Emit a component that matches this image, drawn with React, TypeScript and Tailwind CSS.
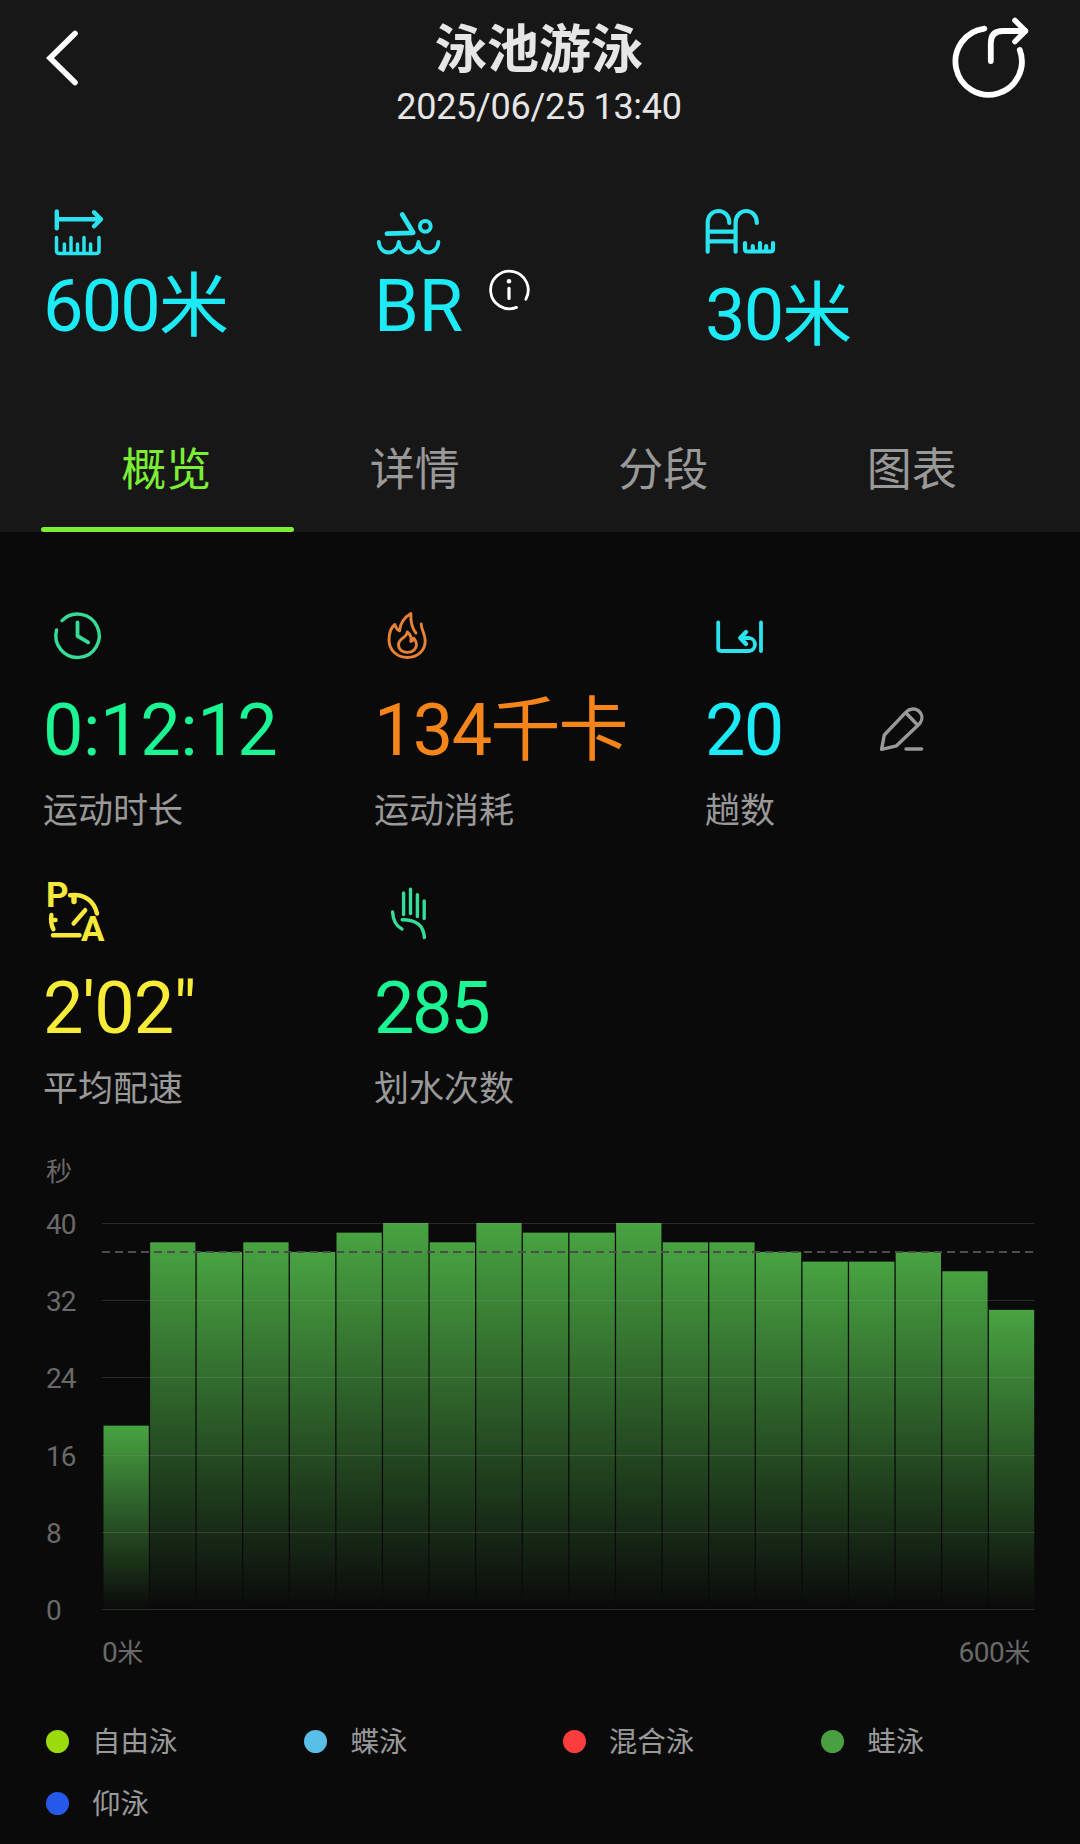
import React from "react";

const SANS = "font-[Roboto,'Noto_Sans_CJK_SC',sans-serif]";

interface IconProps {
  viewBox: string;
  className?: string;
  children: React.ReactNode;
}

function Icon({ viewBox, className = "", children }: IconProps) {
  const [, , width, height] = viewBox.split(" ");
  return (
    <svg
      width={width}
      height={height}
      viewBox={viewBox}
      fill="none"
      stroke="currentColor"
      strokeWidth={3.4}
      strokeLinecap="round"
      strokeLinejoin="round"
      className={`block shrink-0 overflow-visible ${className}`}
    >
      {children}
    </svg>
  );
}

const BackIcon = () => (
  <Icon viewBox="44 28 38 60" className="text-white">
    <path d="M75 33.5L50 58L75 82.5" strokeWidth={5.6} strokeLinejoin="miter" />
  </Icon>
);

const ShareIcon = () => (
  <Icon viewBox="950 16 82 84" className="text-white">
    <g strokeWidth={5.8}>
      <path d="M984.4 28.6A33.2 33.2 0 1 0 1019.8 50" />
      <path d="M990.8 61V43Q990.8 31 1003 31H1025" />
      <path d="M1014.9 20.4L1025.5 31L1014.9 41.6" strokeWidth={5.4} />
    </g>
  </Icon>
);

const DistanceIcon = () => (
  <Icon viewBox="44 200 80 60" className="text-[#2be3ee]">
    <path d="M56.8 211.5V228.3M57 219.3H100M94 212.3L101 219.3L94 226.3" strokeWidth={4.4} />
    <path d="M56.5 237.5V250.5Q56.5 253.5 59.5 253.5H96Q99 253.5 99 250.5V237.5" strokeWidth={3.5} />
    <path
      d="M64.4 244V252M71 237.5V252M77.5 244V252M84 237.5V252M90.6 244V252"
      strokeWidth={3.5}
    />
  </Icon>
);

const SwimIcon = () => (
  <Icon viewBox="375 200 80 60" className="text-[#2be3ee]">
    <circle cx="425.3" cy="226.3" r="5.4" strokeWidth={4} />
    <path d="M402.2 214.5L413.2 232.8L387 233.6" strokeWidth={4.8} />
    <path
      d="M378.8 242C380 256 397 256 398.8 242C400.5 256 416.5 256 418.5 242C420 256 437 256 438.4 242"
      strokeWidth={3.8}
    />
  </Icon>
);

const PoolIcon = () => (
  <Icon viewBox="706 200 80 60" className="text-[#2be3ee]">
    <g strokeWidth={4.2}>
      <path d="M707.7 251.7V223C707.7 207 729.3 207 729.3 223" />
      <path d="M735.6 251.7V223C735.6 207 756.8 207 756.8 223" />
      <path d="M708 231.7H735M708 241.3H735" />
      <path d="M745 243V249Q745 251.5 747.5 251.5H770.5Q773 251.5 773 249V243M752.8 246V250M760 243V250M766.2 246V250" />
    </g>
  </Icon>
);

const InfoIcon = () => (
  <Icon viewBox="488 268 44 44" className="mt-[-3px] text-white">
    <path d="M516.5 307.4A18.8 18.8 0 1 1 525.8 299.2" strokeWidth={2.8} />
    <path d="M509 288.3V298.5" strokeWidth={3.2} />
    <circle cx="509" cy="281.2" r="2.3" fill="currentColor" stroke="none" />
  </Icon>
);

const ClockIcon = () => (
  <Icon viewBox="44 605 80 60" className="text-[#35dd98]">
    <path d="M62 620.6A21.7 21.7 0 1 1 56.6 630" />
    <path d="M77.5 622.5V636L88.2 642.3" strokeWidth={3.8} />
  </Icon>
);

const FlameIcon = () => (
  <Icon viewBox="375 605 80 60" className="text-[#e98236]">
    <path
      d="M421.2 624C421.5 631 425.2 633 425.2 641C425.2 651 417 657.5 407.5 657.5C397 657.5 389 650 389 640C389 633 391 627.5 394.8 624.5C396 628 397.5 630 399.6 630.8C400.5 622 405 617 410.9 613.6C410.5 621 411.5 627.5 415.9 633"
      strokeWidth={2.9}
    />
    <path
      d="M407.3 632C407 637.5 398.5 638.5 398.5 644.5C398.5 649.5 402.5 652.4 407.5 652.4C412.8 652.4 416.5 649 416.5 644.5C416.5 641.5 415 639.8 413.8 638.2C413.4 640 412.4 641 410.8 641.4C411.8 637.5 410.5 634.5 407.3 632Z"
      strokeWidth={2.9}
    />
  </Icon>
);

const LapIcon = () => (
  <Icon viewBox="706 605 80 60" className="text-[#2be3ee]">
    <g strokeWidth={3.8}>
      <path d="M718.2 622.5V648Q718.2 651 721.2 651H749.5A6.6 6.6 0 0 0 749.5 638H741" />
      <path d="M746 632L740.3 638L746 644" strokeWidth={4.4} />
      <path d="M761 622.5V651" />
    </g>
  </Icon>
);

const EditIcon = () => (
  <Icon viewBox="876 700 52 56" className="text-[#999]">
    <path d="M881.6 749.3L884.3 735L906 712.2C914 704 927 713 919.8 723.5L896.5 745.8L881.6 749.3Z" />
    <path d="M906.5 713.5L916.8 724.2M906 749H921.6" />
  </Icon>
);

const PaceIcon = () => (
  <Icon viewBox="44 883 80 60" className="text-[#f8e83c]">
    <g
      fill="currentColor"
      stroke="none"
      className="font-[Roboto,sans-serif] text-[35px] font-bold"
    >
      <text x="46" y="907.3">
        P
      </text>
      <text x="81" y="941.3">
        A
      </text>
    </g>
    <g strokeWidth={4.4}>
      <path d="M70 895.3C84 893.5 94 900.5 97 913.5M85.2 910.2L73.6 923.5" />
      <path d="M53 935.3H79.5M51.4 915C50.6 920 51.2 925 53.4 929.3M53 920H55.5" />
      <path d="M74 897.5V901.5" strokeWidth={5.4} />
    </g>
  </Icon>
);

const HandIcon = () => (
  <Icon viewBox="375 883 80 60" className="text-[#35dd98]">
    <path d="M403.6 893V914.5M410.5 889.2V913.5M417.4 894.8V916.5M424.2 901V918.5" />
    <path d="M392.6 912C393 921 396 926 402 929M402.2 919.8C417 919.8 423.5 925.5 424.4 937.5" />
  </Icon>
);

interface ValueProps {
  value: string;
  unit?: string;
  className?: string;
}

function Value({ value, unit, className = "tracking-[-1.8px]" }: ValueProps) {
  return (
    <div className={`-ml-px h-[72px] whitespace-nowrap text-[72px] leading-none ${className}`}>
      {value}
      {unit && <span className="text-[70px] leading-[0] tracking-[-2px]">{unit}</span>}
    </div>
  );
}

interface MetricProps extends ValueProps {
  icon: React.ReactNode;
  label: string;
  action?: React.ReactNode;
}

function Metric({ icon, value, unit, label, className, action }: MetricProps) {
  return (
    <div className="h-[278px]">
      {icon}
      <div className="mt-[30px] flex">
        <Value value={value} unit={unit} className={className} />
        {action}
      </div>
      <div className="-ml-px mt-[27px] whitespace-nowrap text-[35px] leading-none text-[#999]">
        {label}
      </div>
    </div>
  );
}

const tabs = ["概览", "详情", "分段", "图表"];

const laps = [19, 38, 37, 38, 37, 39, 40, 38, 40, 39, 39, 40, 38, 38, 37, 36, 36, 37, 35, 31];

const ticks = [40, 32, 24, 16, 8, 0];

const strokes = [
  { name: "自由泳", dot: "bg-[#9bdb0c]" },
  { name: "蝶泳", dot: "bg-[#58bfe6]" },
  { name: "混合泳", dot: "bg-[#fb3e3d]" },
  { name: "蛙泳", dot: "bg-[#48a041]" },
  { name: "仰泳", dot: "bg-[#2459ea]" },
];

// Plot area is 932 x 386, one second is 9.65px high
const SECOND = 9.65;

function LapChart() {
  return (
    <svg width="933" height="390" viewBox="0 0 933 390" className="block">
      <defs>
        <linearGradient id="lap" x1="0" y1="0" x2="0" y2="1">
          <stop offset="0" stopColor="#48a341" />
          <stop offset="1" stopColor="#48a341" stopOpacity="0" />
        </linearGradient>
      </defs>
      {laps.map((seconds, i) => (
        <rect
          key={i}
          x={1.5 + i * 46.6}
          y={388 - seconds * SECOND}
          width="45.3"
          height={seconds * SECOND}
          fill="url(#lap)"
        />
      ))}
      {ticks.map((tick) => (
        <path
          key={tick}
          d={`M0 ${Math.round(388 - tick * SECOND) + 0.5}H932.5`}
          stroke="#999"
          strokeOpacity="0.22"
        />
      ))}
      <path d="M0 31H932.5" stroke="#4a4f4a" strokeWidth="2" strokeDasharray="8 5" />
    </svg>
  );
}

export default function App() {
  return (
    <div className={`h-[1844px] w-[1080px] overflow-hidden bg-[#0a0a0a] ${SANS}`}>
      <header className="flex h-[532px] flex-col bg-[#171717]">
        <div className="flex h-[172px] items-start justify-between pl-[44px] pr-[48px] text-[#e6e6e6]">
          <div className="w-[84px] pt-[28px]">
            <BackIcon />
          </div>
          <div className="pt-[25px] text-center">
            <h1 className="text-[52px] font-bold leading-none">泳池游泳</h1>
            <p className="mt-[12px] text-[36px] leading-none tracking-[-0.3px]">2025/06/25 13:40</p>
          </div>
          <div className="w-[82px] pt-[16px]">
            <ShareIcon />
          </div>
        </div>

        <div className="mt-[28px] grid grid-cols-[331px_331px_331px] pl-[44px] text-[#1ceaf4]">
          <div>
            <DistanceIcon />
            <div className="mt-[11px]">
              <Value value="600" unit="米" />
            </div>
          </div>
          <div>
            <SwimIcon />
            <div className="mt-[11px] flex gap-[25px]">
              <Value value="BR" className="tracking-[-0.2px]" />
              <InfoIcon />
            </div>
          </div>
          <div>
            <PoolIcon />
            <div className="mt-[20px]">
              <Value value="30" unit="米" />
            </div>
          </div>
        </div>

        <nav className="mt-auto flex pl-[43px] text-[45px] leading-none text-[#999]">
          {tabs.map((tab, i) => (
            <div key={tab} className="flex w-[248.5px] flex-col items-center">
              <span className={i === 0 ? "mr-[2px] text-[#7bee36]" : "mr-[2px]"}>{tab}</span>
              <span
                className={`mt-[34px] h-[5px] w-[253px] rounded-full ${i === 0 ? "bg-[#7bee36]" : ""}`}
              />
            </div>
          ))}
        </nav>
      </header>

      <section className="grid h-[627px] grid-cols-[331px_331px_331px] content-start pl-[44px] pt-[73px]">
        <Metric
          icon={<ClockIcon />}
          value="0:12:12"
          label="运动时长"
          className="tracking-[-0.4px] text-[#1bf594]"
        />
        <Metric
          icon={<FlameIcon />}
          value="134"
          unit="千卡"
          label="运动消耗"
          className="tracking-[-1.6px] text-[#f5851b]"
        />
        <Metric
          icon={<LapIcon />}
          value="20"
          label="趟数"
          className="w-[171px] tracking-[-1.6px] text-[#1ceaf4]"
          action={
            <div className="pt-[5px]">
              <EditIcon />
            </div>
          }
        />
        <Metric
          icon={<PaceIcon />}
          value={"2'02\""}
          label="平均配速"
          className="tracking-[-0.9px] text-[#f8ec38]"
        />
        <Metric
          icon={<HandIcon />}
          value="285"
          label="划水次数"
          className="tracking-[-2.4px] text-[#1bf594]"
        />
      </section>

      <section className="text-[28px] leading-none text-[#696969]">
        <div className="h-[52px] pl-[46px] text-[26px] leading-none">秒</div>
        <div className="flex">
          <div className="flex w-[102px] flex-col pl-[46px] tracking-[-1px]">
            {ticks.map((tick) => (
              <span key={tick} className="h-[77.2px]">
                {tick}
              </span>
            ))}
          </div>
          <div className="pt-[10px]">
            <LapChart />
          </div>
        </div>
        <div className="mt-[-35px] flex justify-between pl-[102px] pr-[50px] tracking-[-0.4px]">
          <span>
            0<span className="text-[26px] leading-[0]">米</span>
          </span>
          <span>
            600<span className="text-[26px] leading-[0]">米</span>
          </span>
        </div>
      </section>

      <ul className="mt-[62px] grid grid-cols-[repeat(4,258.4px)] pl-[46px] text-[28.5px] leading-none text-[#999]">
        {strokes.map((stroke) => (
          <li key={stroke.name} className="flex h-[62px] items-start">
            <span className={`mt-px size-[23px] rounded-full ${stroke.dot}`} />
            <span className="ml-[23px]">{stroke.name}</span>
          </li>
        ))}
      </ul>
    </div>
  );
}
